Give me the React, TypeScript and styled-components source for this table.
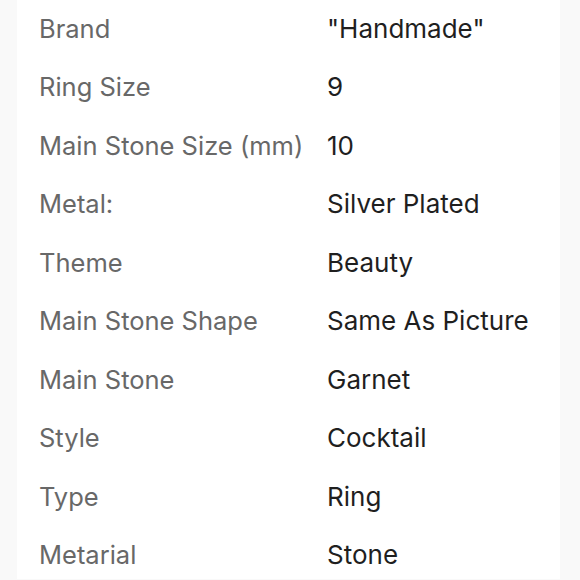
import React from "react";
import styled, { createGlobalStyle } from "styled-components";

const Global = createGlobalStyle`
  html, body { margin: 0; padding: 0; background: #f9f9f9; }
  #root { width: 580px; height: 580px; overflow: hidden; }
`;

const Panel = styled.div`
  margin-left: 17px;
  width: 543px;
  height: 580px;
  background: #ffffff;
  box-sizing: border-box;
  padding: 0 0 0 22px;
  margin-top: -1px;
`;

const Table = styled.dl`
  margin: 0;
  display: grid;
  grid-template-columns: 288px 1fr;
  grid-auto-rows: 58.5px;
  align-items: center;
  font-family: Inter, "Noto Sans", sans-serif;
`;

const Label = styled.dt`
  color: #686868;
  font-size: 25.5px;
  white-space: nowrap;
`;

const Value = styled.dd`
  margin: 0;
  color: #1f1f1f;
  font-size: 26px;
  white-space: nowrap;
`;

const rows: [string, string][] = [
  ["Brand", '"Handmade"'],
  ["Ring Size", "9"],
  ["Main Stone Size (mm)", "10"],
  ["Metal:", "Silver Plated"],
  ["Theme", "Beauty"],
  ["Main Stone Shape", "Same As Picture"],
  ["Main Stone", "Garnet"],
  ["Style", "Cocktail"],
  ["Type", "Ring"],
  ["Metarial", "Stone"],
];

export default function App() {
  return (
    <>
      <Global />
      <Panel>
        <Table>
          {rows.map(([k, v]) => (
            <React.Fragment key={k}>
              <Label>{k}</Label>
              <Value>{v}</Value>
            </React.Fragment>
          ))}
        </Table>
      </Panel>
    </>
  );
}
